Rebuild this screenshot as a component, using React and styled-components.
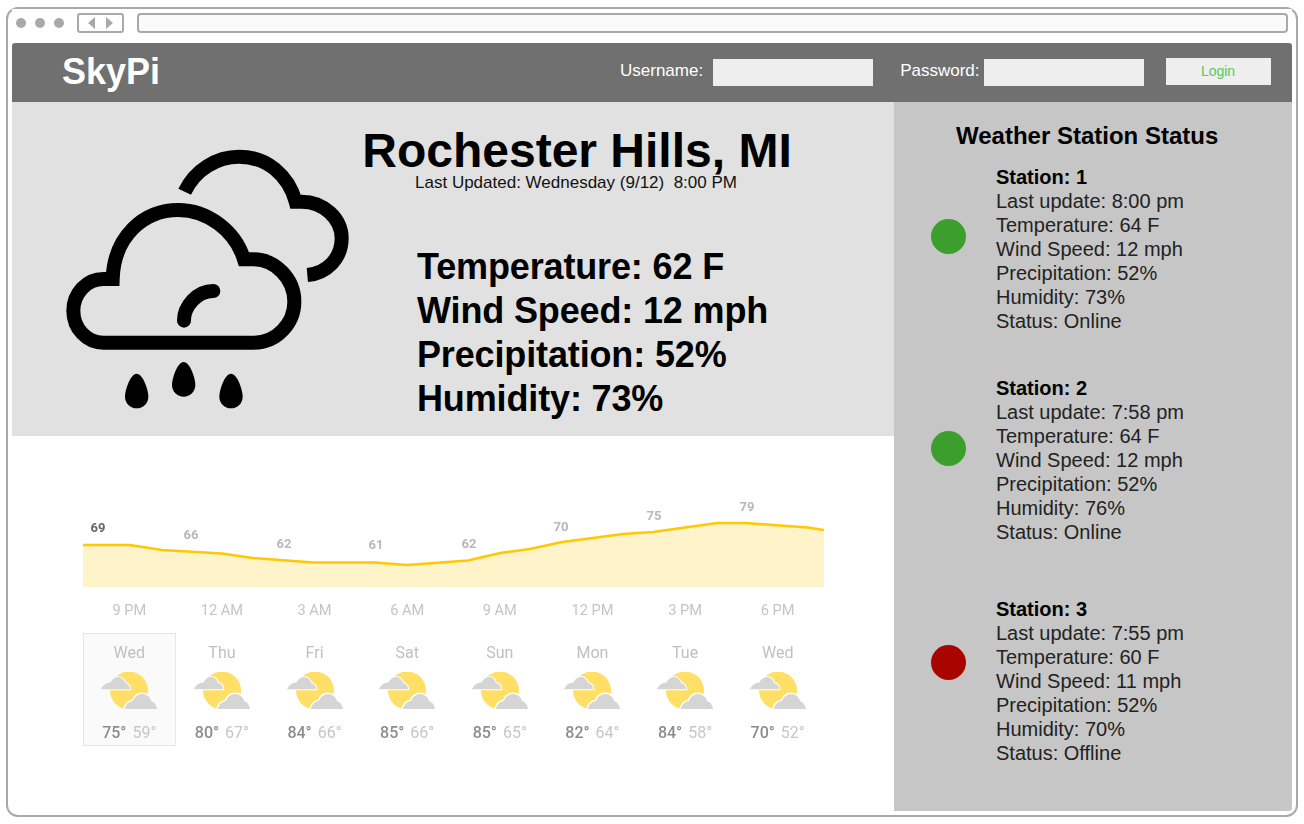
import React from "react";
import styled, { createGlobalStyle } from "styled-components";

const GlobalStyle = createGlobalStyle`
  html, body {
    margin: 0;
    padding: 0;
    background: #fff;
    font-family: "Liberation Sans", Arial, sans-serif;
  }
  * { box-sizing: border-box; }
`;

// Browser frame
const Page = styled.div`
  width: 1304px;
  height: 824px;
  padding: 7px 6px 6px 6px;
  overflow: hidden;
`;

const Frame = styled.div`
  height: 810px;
  border: 2px solid #a9a9a9;
  border-radius: 12px;
  padding: 0 4px;
  background: #fff;
  display: flex;
  flex-direction: column;
`;

const Chrome = styled.div`
  height: 34px;
  display: flex;
  align-items: center;
  background: #fff;
  padding: 0 0 6px 4px;
`;

const Dots = styled.div`
  display: flex;
  gap: 9px;
  width: 61px;
`;

const Dot = styled.span`
  width: 10px;
  height: 10px;
  border-radius: 50%;
  background: #a9a9a9;
`;

const NavButtons = styled.div`
  width: 47px;
  height: 20px;
  border: 2px solid #a9a9a9;
  border-radius: 3px;
  display: flex;
  align-items: center;
  justify-content: center;
  gap: 11px;
  margin-right: 13px;
`;

const Arrow = styled.span`
  width: 0;
  height: 0;
  border-top: 6px solid transparent;
  border-bottom: 6px solid transparent;
  border-left: ${(p) => (p.$right ? "7px solid #a9a9a9" : "0")};
  border-right: ${(p) => (p.$right ? "0" : "7px solid #a9a9a9")};
`;

const UrlBar = styled.div`
  width: 1151px;
  height: 20px;
  border: 2px solid #a9a9a9;
  border-radius: 4px;
  background: #fafafa;
`;

// Top bar
const Header = styled.header`
  height: 59px;
  background: #707070;
  border-radius: 3px 3px 0 0;
  display: flex;
  align-items: center;
  color: #fff;
  padding-left: 50px;
`;

const Brand = styled.h1`
  margin: 0 0 2px;
  font-size: 36px;
  font-weight: 700;
  width: 558px;
`;

const FieldLabel = styled.label`
  font-size: 17px;
  margin-right: ${(p) => p.$gap}px;
  margin-bottom: 4px;
`;

const Input = styled.div`
  width: 160px;
  height: 27px;
  background: #eeeeee;
  margin-right: ${(p) => p.$after}px;
`;

const LoginButton = styled.button`
  width: 105px;
  height: 27px;
  border: 0;
  padding: 0 0 2px;
  margin-bottom: 2px;
  background: #eeeeee;
  color: #55c955;
  font-family: inherit;
  font-size: 14px;
`;

// Main area
const Main = styled.main`
  flex: 1;
  display: flex;
  margin-bottom: 4px;
`;

const LeftColumn = styled.div`
  width: 882px;
  display: flex;
  flex-direction: column;
  background: #fff;
`;

const Hero = styled.section`
  height: 334px;
  background: #e1e1e1;
  padding: 24px 0 0 28px;
  display: flex;
  align-items: flex-start;
`;

const HeroIcon = styled.svg`
  width: 320px;
  height: 300px;
  margin-top: 4px;
  flex-shrink: 0;
`;

const HeroText = styled.div`
  width: 434px;
  color: #000;
`;

const City = styled.h2`
  margin: 0;
  padding-top: 1px;
  font-size: 48px;
  line-height: 47px;
  font-weight: 700;
  text-align: center;
  white-space: nowrap;
`;

const Updated = styled.div`
  padding-right: 2px;
  font-size: 17px;
  line-height: 18px;
  color: #111;
  text-align: center;
  white-space: pre;
`;

const Stats = styled.div`
  margin: 53px 0 0 57px;
`;

const Stat = styled.div`
  font-size: 36px;
  line-height: 44px;
  font-weight: 700;
  letter-spacing: -0.14px;
  white-space: nowrap;
`;

// Forecast widget
const Forecast = styled.section`
  width: 741px;
  margin: 59px 0 0 71px;
  font-family: Roboto, sans-serif;
  filter: blur(0.35px);
`;

const Chart = styled.svg`
  display: block;
  width: 741px;
  height: 97px;
`;

const ChartLabel = styled.text`
  font-family: Roboto, sans-serif;
  font-size: 13px;
  font-weight: 700;
  text-anchor: middle;
  fill: ${(p) => (p.$active ? "#666666" : "#b8b8b8")};
`;

const Grid = styled.div`
  display: grid;
  grid-template-columns: repeat(8, 1fr);
`;

const HourRow = styled(Grid)`
  margin-top: 10px;
  height: 31px;
`;

const Hour = styled.div`
  font-size: 14.6px;
  line-height: 16px;
  text-align: center;
  color: #c4c4c4;
`;

const DayCard = styled.div`
  height: 113px;
  padding-top: 10px;
  display: flex;
  flex-direction: column;
  align-items: center;
  border: 1px solid ${(p) => (p.$selected ? "#e6e6e6" : "transparent")};
  background: ${(p) => (p.$selected ? "#fafafa" : "transparent")};
`;

const DayName = styled.div`
  font-size: 16px;
  line-height: 17px;
  color: #c0c0c0;
`;

const DayIcon = styled.svg`
  width: 56px;
  height: 37px;
  margin-top: 11px;
`;

const Temps = styled.div`
  margin-top: 15px;
  display: flex;
  gap: 6px;
  font-size: 16px;
  line-height: 17px;
`;

const High = styled.span`
  color: #8c8c8c;
  font-weight: 500;
`;

const Low = styled.span`
  color: #c6c6c6;
`;

// Sidebar
const Sidebar = styled.aside`
  width: 398px;
  background: #c6c6c6;
  border-radius: 0 0 3px 0;
  padding: 20px 0 0 37px;
  color: #222;
`;

const SidebarTitle = styled.h3`
  margin: 0 0 15px 25px;
  font-size: 24px;
  line-height: 28px;
  font-weight: 700;
  color: #000;
  white-space: nowrap;
`;

const Station = styled.div`
  display: flex;
  margin-top: ${(p) => p.$top}px;
`;

const StatusDot = styled.span`
  width: 35px;
  height: 35px;
  border-radius: 50%;
  background: ${(p) => (p.$online ? "#3c9e2c" : "#a80500")};
  margin: ${(p) => p.$offset}px 30px 0 0;
  flex-shrink: 0;
`;

const StationInfo = styled.div`
  font-size: 20px;
  line-height: 24px;
`;

const StationName = styled.div`
  font-weight: 700;
  color: #000;
`;

const HeroGlyph = () => (
  <HeroIcon viewBox="0 0 960 900">
    <g fill="none" stroke="#000" strokeWidth="42">
      <path d="M434 185 C465 120 530 80 597 80 C680 80 745 135 767 215 H785 C850 215 905 265 905 325 C905 385 860 430 802 435" />
      <path d="M190 638 H640 C710 638 763 580 763 515 C763 445 705 388 640 388 H612 C585 300 500 240 415 240 C310 240 222 320 218 447 H190 C140 447 100 490 100 542 C100 595 140 638 190 638 Z" />
      <path d="M432 572 C432 530 470 483 520 483" strokeLinecap="round" />
    </g>
    <g fill="#000">
      <path d="M431 696 C450 696 466 745 466 765 A35 35 0 0 1 396 765 C396 745 412 696 431 696 Z" />
      <path d="M290 731 C309 731 325 780 325 800 A35 35 0 0 1 255 800 C255 780 271 731 290 731 Z" />
      <path d="M573 731 C592 731 608 780 608 800 A35 35 0 0 1 538 800 C538 780 554 731 573 731 Z" />
    </g>
  </HeroIcon>
);

const PartlyCloudy = ({ halo }) => (
  <DayIcon viewBox="0 0 56 37">
    <circle cx="28" cy="18.5" r="19" fill="#ffdf66" />
    <path
      d="M0 17.3 C1.5 13.5 5 10.5 9.5 10.5 C11 7 14 5 17 5 C20.5 5 23 7.5 24 11 C27 11.5 29 14 29.3 17.3 Z"
      fill="#d5d5d5"
      stroke={halo}
      strokeWidth="2"
      paintOrder="stroke"
    />
    <path
      d="M23.7 37 C25 32.5 28 29.5 32 29 C33.5 25 37 22 41 22 C45.5 22 49 25 50 29 C53.5 30 55.5 33.5 56 37 Z"
      fill="#d5d5d5"
      stroke={halo}
      strokeWidth="3"
      paintOrder="stroke"
    />
  </DayIcon>
);

const linePoints = [
  [0, 50], [47, 50], [79, 55], [139, 58.5], [170, 63], [230, 67.5], [292, 67.5],
  [324, 70], [385, 65.5], [417, 58], [447, 54], [479, 47], [540, 39], [570, 37],
  [634, 28], [662, 28], [725, 32.5], [741, 35],
];
const linePath = linePoints.map((p) => p.join(",")).join(" ");
const areaPath = `0,92 ${linePath} 741,92`;

const chartLabels = [
  { x: 15, y: 37, value: 69, active: true },
  { x: 108, y: 44, value: 66 },
  { x: 201, y: 53, value: 62 },
  { x: 293, y: 54, value: 61 },
  { x: 386, y: 53, value: 62 },
  { x: 478, y: 36, value: 70 },
  { x: 571, y: 25, value: 75 },
  { x: 664, y: 16, value: 79 },
];

const hours = ["9 PM", "12 AM", "3 AM", "6 AM", "9 AM", "12 PM", "3 PM", "6 PM"];

const days = [
  { name: "Wed", high: 75, low: 59 },
  { name: "Thu", high: 80, low: 67 },
  { name: "Fri", high: 84, low: 66 },
  { name: "Sat", high: 85, low: 66 },
  { name: "Sun", high: 85, low: 65 },
  { name: "Mon", high: 82, low: 64 },
  { name: "Tue", high: 84, low: 58 },
  { name: "Wed", high: 70, low: 52 },
];

const stations = [
  { id: 1, update: "8:00 pm", temp: 64, wind: 12, precip: 52, humidity: 73, online: true, top: 0, offset: 54 },
  { id: 2, update: "7:58 pm", temp: 64, wind: 12, precip: 52, humidity: 76, online: true, top: 43, offset: 55 },
  { id: 3, update: "7:55 pm", temp: 60, wind: 11, precip: 52, humidity: 70, online: false, top: 53, offset: 48 },
];

export default function App() {
  return (
    <Page>
      <GlobalStyle />
      <Frame>
        <Chrome>
          <Dots>
            <Dot />
            <Dot />
            <Dot />
          </Dots>
          <NavButtons>
            <Arrow />
            <Arrow $right />
          </NavButtons>
          <UrlBar />
        </Chrome>
        <Header>
          <Brand>SkyPi</Brand>
          <FieldLabel $gap={10}>Username:</FieldLabel>
          <Input $after={27} />
          <FieldLabel $gap={4}>Password:</FieldLabel>
          <Input $after={22} />
          <LoginButton>Login</LoginButton>
        </Header>
        <Main>
          <LeftColumn>
            <Hero>
              <HeroGlyph />
              <HeroText>
                <City>Rochester Hills, MI</City>
                <Updated>Last Updated: Wednesday (9/12)  8:00 PM</Updated>
                <Stats>
                  <Stat>Temperature: 62 F</Stat>
                  <Stat>Wind Speed: 12 mph</Stat>
                  <Stat>Precipitation: 52%</Stat>
                  <Stat>Humidity: 73%</Stat>
                </Stats>
              </HeroText>
            </Hero>
            <Forecast>
              <Chart viewBox="0 0 741 97">
                <polygon points={areaPath} fill="#fef3c9" />
                <polyline points={linePath} fill="none" stroke="#ffc800" strokeWidth="2.6" />
                {chartLabels.map((l) => (
                  <ChartLabel key={l.x} x={l.x} y={l.y} $active={l.active}>
                    {l.value}
                  </ChartLabel>
                ))}
              </Chart>
              <HourRow>
                {hours.map((h) => (
                  <Hour key={h}>{h}</Hour>
                ))}
              </HourRow>
              <Grid>
                {days.map((d, i) => (
                  <DayCard key={i} $selected={i === 0}>
                    <DayName>{d.name}</DayName>
                    <PartlyCloudy halo={i === 0 ? "#fafafa" : "#ffffff"} />
                    <Temps>
                      <High>{d.high}°</High>
                      <Low>{d.low}°</Low>
                    </Temps>
                  </DayCard>
                ))}
              </Grid>
            </Forecast>
          </LeftColumn>
          <Sidebar>
            <SidebarTitle>Weather Station Status</SidebarTitle>
            {stations.map((s) => (
              <Station key={s.id} $top={s.top}>
                <StatusDot $online={s.online} $offset={s.offset} />
                <StationInfo>
                  <StationName>Station: {s.id}</StationName>
                  <div>Last update: {s.update}</div>
                  <div>Temperature: {s.temp} F</div>
                  <div>Wind Speed: {s.wind} mph</div>
                  <div>Precipitation: {s.precip}%</div>
                  <div>Humidity: {s.humidity}%</div>
                  <div>Status: {s.online ? "Online" : "Offline"}</div>
                </StationInfo>
              </Station>
            ))}
          </Sidebar>
        </Main>
      </Frame>
    </Page>
  );
}
